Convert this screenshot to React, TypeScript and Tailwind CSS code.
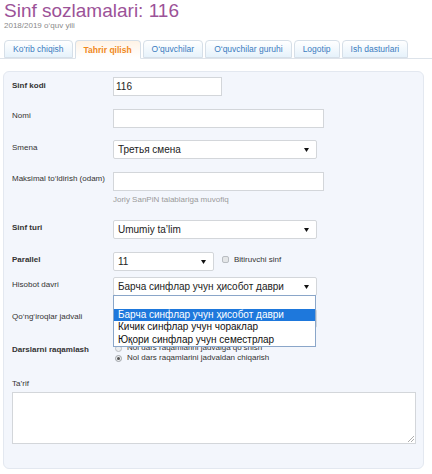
import React from "react";

const Arrow = () => (
  <svg width="5" height="4" viewBox="0 0 5 4" className="absolute right-[7px] top-[7px]">
    <path d="M0 0 H5 L2.5 4 Z" fill="#111" />
  </svg>
);

function Select({ w, value }: { w: string; value: string }) {
  return (
    <div className={`relative h-[19px] ${w} bg-white border border-[#d3d6da] rounded-[2px] text-[10px] leading-[17px] pl-[4px] text-[#222] whitespace-nowrap`}>
      {value}
      <Arrow />
    </div>
  );
}

function Input({ w, value }: { w: string; value?: string }) {
  return (
    <div className={`h-[19px] ${w} bg-white border border-[#d3d6da] text-[10px] leading-[17px] pl-[2px] text-[#222]`}>
      {value}
    </div>
  );
}

const Tab = ({ label, active }: { label: string; active?: boolean }) => (
  <div
    className={
      active
        ? "shrink-0 whitespace-nowrap h-[19px] -mb-px px-[8px] rounded-t-[4px] border border-[#d6dfe8] border-b-white bg-gradient-to-b from-[#fff3e6] to-white text-[#f0891c] font-bold text-[8.5px] leading-[18px]"
        : "shrink-0 whitespace-nowrap h-[18px] px-[8px] rounded-t-[4px] border border-[#d6dfe8] bg-gradient-to-b from-white to-[#e6f2fb] text-[#3b7cbf] text-[8.5px] leading-[17px]"
    }
  >
    {label}
  </div>
);

export default function App() {
  return (
    <div
      className="relative w-[432px] h-[474px] overflow-hidden bg-white"
      style={{ fontFamily: '"Liberation Sans", Arial, sans-serif' }}
    >
      <div className="pl-[4px]">
        <div className="text-[19px] leading-[22px] text-[#9c5298]">Sinf sozlamalari: 116</div>
        <div className="text-[8px] leading-[8px] text-[#8a8a8a]">2018/2019 o‘quv yili</div>
      </div>

      <div className="mt-[10px] flex items-end gap-[2px] pl-[4px] border-b border-[#dde3ea]">
        <Tab label="Ko‘rib chiqish" />
        <Tab label="Tahrir qilish" active />
        <Tab label="O‘quvchilar" />
        <Tab label="O‘quvchilar guruhi" />
        <Tab label="Logotip" />
        <Tab label="Ish dasturlari" />
      </div>

      <div className="ml-[3px] mt-[12px] w-[421px] h-[398px] rounded-[6px] border border-[#e3e8f0] bg-[#f3f6fc] pl-[8px] pt-[5px] text-[8px] text-[#333]">
        <div className="flex">
          <div className="w-[101px] pt-[3px] font-bold">Sinf kodi</div>
          <Input w="w-[109px]" value="116" />
        </div>
        <div className="flex mt-[13px]">
          <div className="w-[101px] pt-[1px]">Nomi</div>
          <Input w="w-[211px]" />
        </div>
        <div className="flex mt-[12px]">
          <div className="w-[101px] pt-[2px]">Smena</div>
          <Select w="w-[204px]" value="Третья смена" />
        </div>
        <div className="flex mt-[13px]">
          <div className="w-[101px] pt-[1px]">Maksimal to‘ldirish (odam)</div>
          <div>
            <Input w="w-[211px]" />
            <div className="mt-[4px] text-[#9a9a9a] leading-[9px]">Joriy SanPiN talablariga muvofiq</div>
          </div>
        </div>
        <div className="flex mt-[16px]">
          <div className="w-[101px] pt-[2px] font-bold">Sinf turi</div>
          <Select w="w-[204px]" value="Umumiy ta’lim" />
        </div>
        <div className="flex mt-[13px] items-start">
          <div className="w-[101px] pt-[2px] font-bold">Parallel</div>
          <Select w="w-[101px]" value="11" />
          <div className="ml-[8px] mt-[4px] w-[7px] h-[7px] rounded-[2px] border border-[#b9bdc2] bg-[#e4e6e8]" />
          <div className="ml-[5px] pt-[2px]">Bitiruvchi sinf</div>
        </div>
        <div className="flex mt-[6px]">
          <div className="w-[101px] pt-[2px]">Hisobot davri</div>
          <Select w="w-[204px]" value="Барча синфлар учун ҳисобот даври" />
        </div>
        <div className="flex mt-[13px]">
          <div className="w-[101px] pt-[2px]">Qo‘ng‘iroqlar jadvali</div>
          <Select w="w-[204px]" value="" />
        </div>
        <div className="flex mt-[14px]">
          <div className="w-[101px] pt-[2px] font-bold">Darslarni raqamlash</div>
          <div className="pl-[2px] pt-[1px]">
            <div className="flex items-center h-[10px]">
              <div className="w-[7px] h-[7px] rounded-full border border-[#b9bdc2] bg-[#eceef0]" />
              <span className="ml-[5px]">Nol dars raqamlarini jadvalga qo‘shish</span>
            </div>
            <div className="flex items-center h-[10px]">
              <div className="w-[7px] h-[7px] rounded-full border border-[#9ea3a8] bg-[#eceef0] flex items-center justify-center">
                <div className="w-[3px] h-[3px] rounded-full bg-[#555]" />
              </div>
              <span className="ml-[5px]">Nol dars raqamlarini jadvaldan chiqarish</span>
            </div>
          </div>
        </div>
        <div className="mt-[15px]">Ta’rif</div>
        <div className="relative mt-[2px] w-[404px] h-[52px] bg-white border border-[#d3d6da]">
          <svg width="6" height="6" viewBox="0 0 6 6" className="absolute right-[1px] bottom-[1px]">
            <path d="M6 0 L0 6 M6 3 L3 6" stroke="#999" strokeWidth="0.8" />
          </svg>
        </div>
      </div>

      <div className="absolute left-[113px] top-[295px] w-[203px] bg-white border border-[#8aa6c9] text-[10px] leading-[12.5px] text-[#111] whitespace-nowrap">
        <div className="h-[12.5px]" />
        <div className="bg-[#1e78dc] text-white pl-[4px]">Барча синфлар учун ҳисобот даври</div>
        <div className="pl-[4px]">Кичик синфлар учун чораклар</div>
        <div className="pl-[4px]">Юқори синфлар учун семестрлар</div>
      </div>
    </div>
  );
}
